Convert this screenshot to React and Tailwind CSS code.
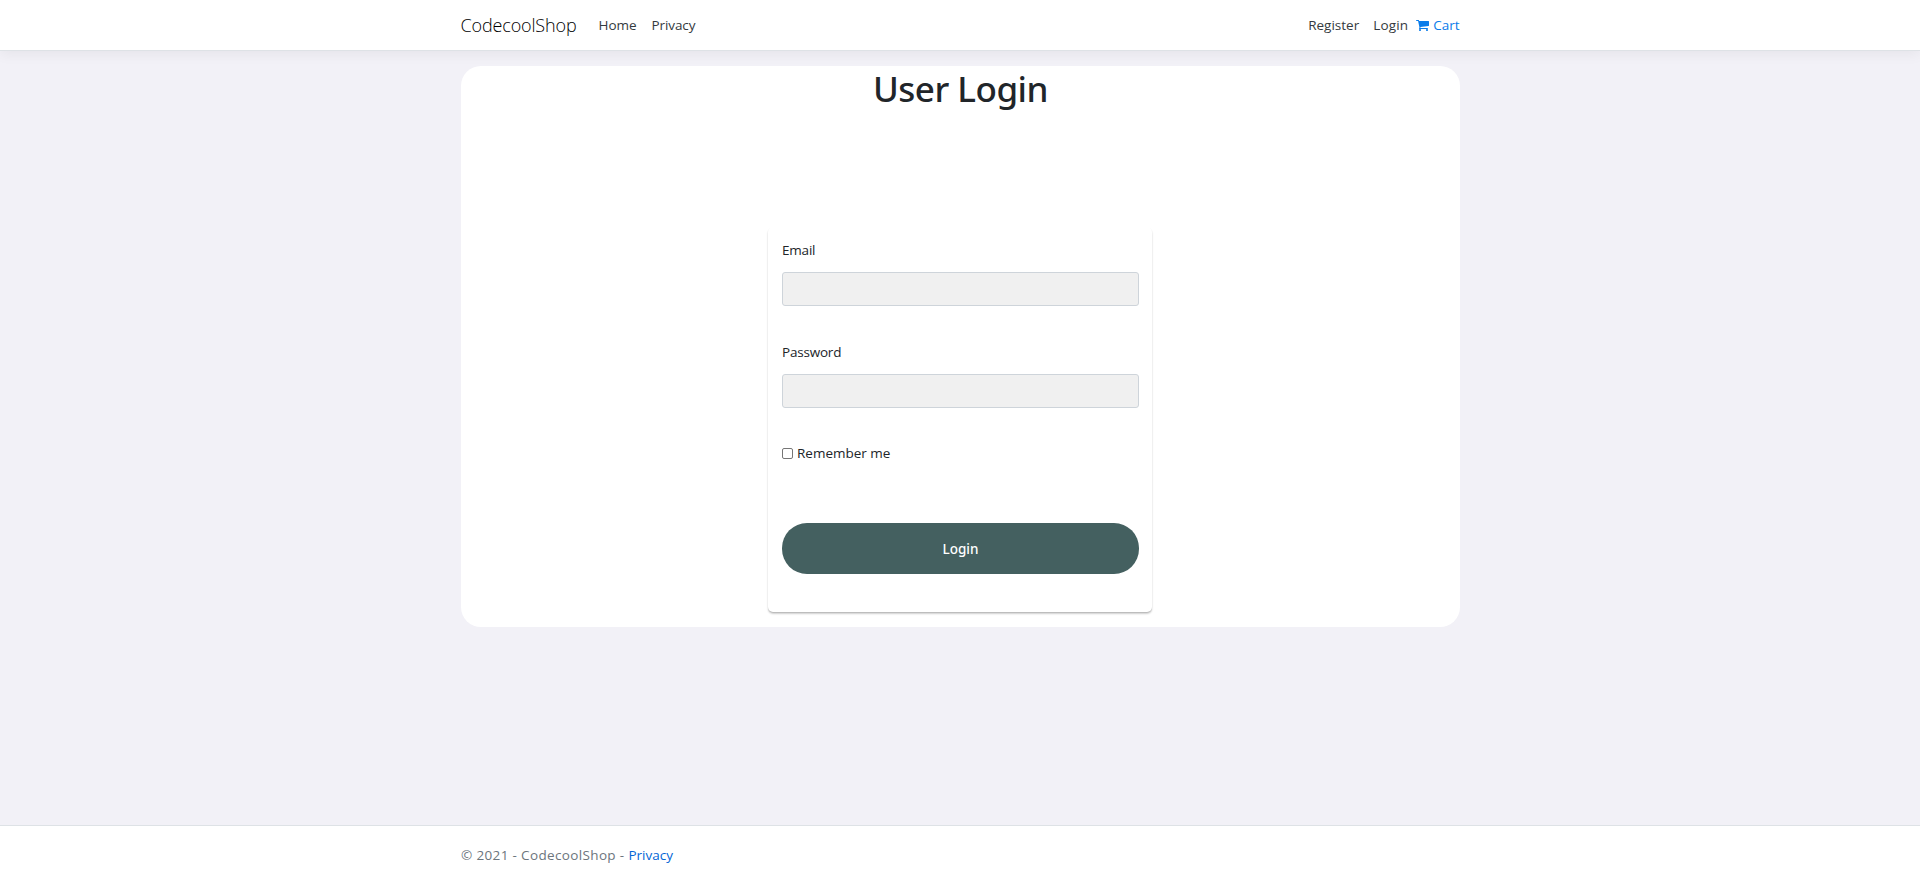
import React from "react";

function CartIcon() {
  return (
    <svg viewBox="0 128 1664 1536" width="13" height="12" fill="currentColor" aria-hidden="true">
      <path d="M640 1536q0 52-38 90t-90 38-90-38-38-90 38-90 90-38 90 38 38 90zm896 0q0 52-38 90t-90 38-90-38-38-90 38-90 90-38 90 38 38 90zm128-1088v512q0 24-16.5 42.5t-40.5 21.5l-1044 122q13 60 13 70 0 16-24 64h920q26 0 45 19t19 45-19 45-45 19h-1024q-26 0-45-19t-19-45q0-11 8-31.5t16-36 21.5-40 15.5-29.5l-177-823h-204q-26 0-45-19t-19-45 19-45 45-19h256q16 0 28.5 6.5t19.5 15.5 13 24.5 8 26 5.5 29.5 4.5 26h1201q26 0 45 19t19 45z" />
    </svg>
  );
}

function Header() {
  return (
    <header className="h-[51px] shrink-0 border-b border-[#dee2e6] bg-white shadow-[0_4px_12px_rgba(0,0,0,0.05)]">
      <nav className="mx-auto flex h-[50px] w-[999px] items-center text-[13.5px] text-[#343a40]">
        <a href="#" className="w-[138px] text-[18px] font-light tracking-[-0.15px] text-black">
          CodecoolShop
        </a>
        <a href="#" className="w-[53px]">Home</a>
        <a href="#" className="tracking-[-0.1px]">Privacy</a>
        <div className="ml-auto flex items-center">
          <a href="#" className="w-[65px]">Register</a>
          <a href="#" className="w-[43px] tracking-[0.2px]">Login</a>
          <a href="#" className="flex items-center gap-1 text-[#0a7cea]">
            <CartIcon />
            Cart
          </a>
        </div>
      </nav>
    </header>
  );
}

function Field({ label, type, className = "" }) {
  return (
    <label className={`block ${className}`}>
      <span className="block h-8 leading-[20px] tracking-[-0.2px]">{label}</span>
      <input
        type={type}
        className="block h-[34px] w-full rounded-[3px] border border-[#ced4da] bg-[#f0f0f0] px-3"
      />
    </label>
  );
}

function LoginForm() {
  return (
    <form className="ml-[307px] mt-[114px] h-[385px] w-[384px] rounded-[5px] pl-[14px] pr-[13px] pt-[13px] text-[13.5px] shadow-[0_2px_2px_rgba(0,0,0,0.18),0_1px_1px_rgba(0,0,0,0.12)]">
      <Field label="Email" type="email" />
      <Field label="Password" type="password" className="mt-9" />
      <label className="mt-[35px] flex h-5 items-center gap-1">
        <input
          type="checkbox"
          className="size-[11px] appearance-none rounded-[2px] border border-[#767676] bg-white"
        />
        Remember me
      </label>
      <button
        type="button"
        className="mt-[60px] h-[51px] w-full rounded-[25px] bg-[#446060] pt-px font-['Noto_Sans',sans-serif] font-medium text-white"
      >
        Login
      </button>
    </form>
  );
}

export default function App() {
  return (
    <div className="flex h-screen flex-col bg-[#f2f1f7] font-['Open_Sans',sans-serif] text-[#212529]">
      <Header />
      <main className="ml-[461px] mt-[15px] h-[561px] w-[999px] rounded-[20px] bg-white">
        <h1 className="pb-[1px] text-center font-['Noto_Sans',sans-serif] text-[35px] font-medium leading-[46px] tracking-[-0.5px]">
          User Login
        </h1>
        <LoginForm />
      </main>
      <footer className="mt-auto h-[55px] border-t border-[#dee2e6] bg-white">
        <div className="mx-auto flex h-[54px] w-[998px] items-center pt-[4px] text-[13.5px] text-[#6c757d]">
          <span className="tracking-[0.35px]">© 2021 - CodecoolShop -&nbsp;</span>
          <a href="#" className="text-[#0366d6]">Privacy</a>
        </div>
      </footer>
    </div>
  );
}
